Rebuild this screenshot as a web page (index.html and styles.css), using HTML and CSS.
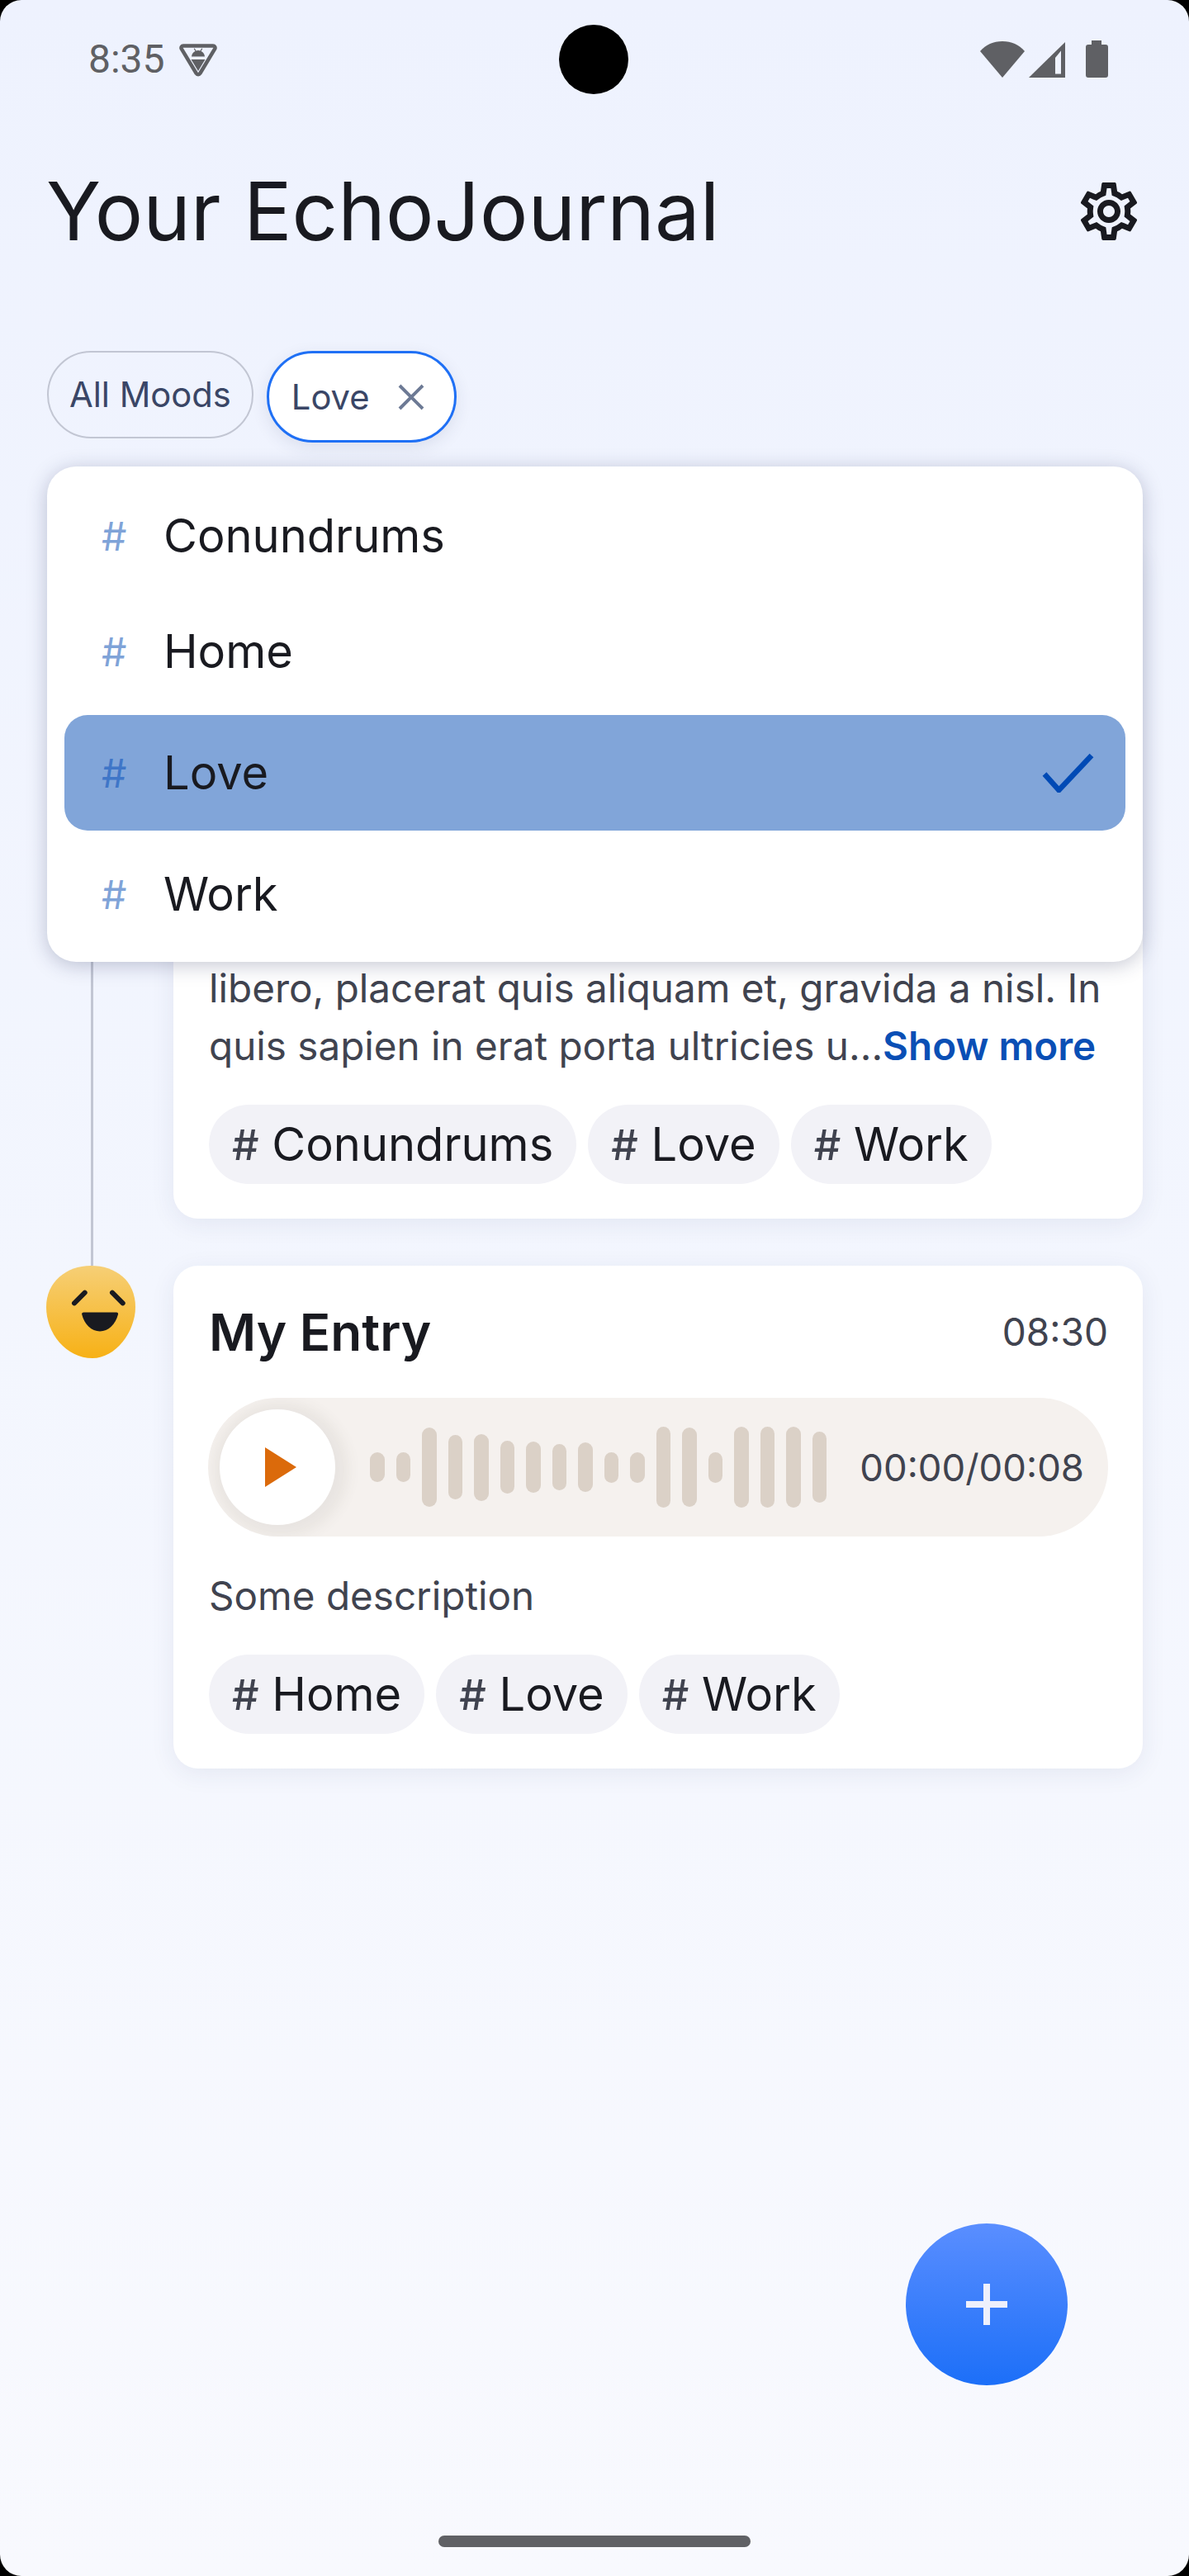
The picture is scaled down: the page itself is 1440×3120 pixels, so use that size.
FILE: index.html
```html
<!DOCTYPE html>
<html lang="en">
<head>
<meta charset="utf-8">
<title>Your EchoJournal</title>
<link rel="stylesheet" href="styles.css">
</head>
<body>
<div class="phone">
  <div class="camera"></div>
  <header class="status">
    <div class="status-left">
      <span class="clock">8:35</span>
      <svg class="debug" viewBox="0 0 46 42"><path d="M5 3.500H41a2.500 2.500 0 0 1 2.200 3.700L25.200 37a2.500 2.500 0 0 1-4.400 0L2.800 7.200A2.500 2.500 0 0 1 5 3.500Z" fill="none" stroke="#5f6064" stroke-width="4.500" stroke-linejoin="round"/><path d="M15 16.500c.3-3.200 2-5.500 4.500-6.600L17.700 7l1-.6 1.900 3a8 8 0 0 1 4.800 0l1.900-3 1 .6-1.800 2.900c2.500 1.100 4.200 3.400 4.500 6.600Z" fill="#5f6064"/><path d="M14.500 20H31.500L23 34Z" fill="#5f6064"/></svg>
    </div>
    <div class="status-right">
      <svg class="wifi" viewBox="0 0 54 44"><path d="M0 12C7 4 16 0 27 0s20 4 27 12L27 44Z" fill="#5f6064"/></svg>
      <svg class="signal" viewBox="0 0 44 43"><path d="M44 0V43H0Z" fill="#5f6064"/><path d="M32 19 39 10.500V38.500H32Z" fill="#eff3fe"/></svg>
      <svg class="battery" viewBox="0 0 27 45"><path d="M7 0H19V5H24a3 3 0 0 1 3 3V42a3 3 0 0 1-3 3H3a3 3 0 0 1-3-3V8a3 3 0 0 1 3-3H7Z" fill="#5f6064"/></svg>
    </div>
  </header>

  <div class="app-bar">
    <h1 class="title">Your EchoJournal</h1>
    <svg class="gear" viewBox="0 0 24 24"><path fill="#191a20" d="M19.430 12.980c.04-.32.07-.64.07-.98 0-.34-.03-.66-.07-.98l2.110-1.650c.19-.15.24-.42.12-.64l-2-3.460c-.09-.16-.26-.25-.44-.25-.06 0-.12.01-.17.03l-2.490 1c-.52-.4-1.080-.73-1.690-.98l-.38-2.650C14.460 2.180 14.250 2 14 2h-4c-.25 0-.46.18-.49.42l-.38 2.650c-.61.25-1.170.59-1.690.98l-2.490-1c-.06-.02-.12-.03-.18-.03-.17 0-.34.09-.43.25l-2 3.460c-.13.22-.07.49.12.64l2.110 1.650c-.04.32-.07.65-.07.98 0 .33.03.66.07.98l-2.110 1.650c-.19.15-.24.42-.12.64l2 3.460c.09.16.26.25.44.25.06 0 .12-.01.17-.03l2.490-1c.52.4 1.080.73 1.690.98l.38 2.650c.03.24.24.42.49.42h4c.25 0 .46-.18.49-.42l.38-2.650c.61-.25 1.170-.59 1.690-.98l2.490 1c.06.02.12.03.18.03.17 0 .34-.09.43-.25l2-3.460c.12-.22.07-.49-.12-.64l-2.110-1.650zm-1.980-1.710c.04.31.05.52.05.73 0 .21-.02.43-.05.73l-.14 1.130.89.7 1.080.84-.7 1.210-1.270-.51-1.040-.42-.9.68c-.43.32-.84.56-1.250.73l-1.060.43-.16 1.130-.2 1.350h-1.400l-.19-1.350-.16-1.130-1.060-.43c-.43-.18-.83-.41-1.230-.71l-.91-.7-1.060.43-1.270.51-.7-1.210 1.080-.84.89-.7-.14-1.130c-.03-.31-.05-.54-.05-.74s.02-.43.05-.73l.14-1.130-.89-.7-1.080-.84.7-1.210 1.270.51 1.040.42.9-.68c.43-.32.84-.56 1.250-.73l1.060-.43.16-1.130.2-1.350h1.390l.19 1.350.16 1.130 1.060.43c.43.18.83.41 1.230.71l.91.7 1.060-.43 1.270-.51.7 1.210-1.070.85-.89.7.14 1.130zM12 8c-2.210 0-4 1.790-4 4s1.790 4 4 4 4-1.790 4-4-1.790-4-4-4zm0 6c-1.100 0-2-.9-2-2s.9-2 2-2 2 .9 2 2-.9 2-2 2z"/></svg>
  </div>

  <div class="filters">
    <div class="filter">All Moods</div>
    <div class="filter filter-active">
      <span>Love</span>
      <svg class="filter-x" viewBox="0 0 32 32"><path d="M2 2 30 30M30 2 2 30" stroke="#6d7a95" stroke-width="4" fill="none"/></svg>
    </div>
    <div class="dropdown">
      <div class="option"><span class="hash">#</span>Conundrums</div>
      <div class="option"><span class="hash">#</span>Home</div>
      <div class="option option-selected"><span class="hash">#</span><span class="option-label">Love</span>
        <svg class="check" viewBox="0 0 64 48"><path d="M3 25.500 20.400 45 60 3" fill="none" stroke="#004ab5" stroke-width="6.500"/></svg>
      </div>
      <div class="option"><span class="hash">#</span>Work</div>
    </div>
  </div>

  <main class="timeline">
    <article class="entry entry-linked">
      <div class="rail">
        <svg class="mood mood-covered" viewBox="0 0 108 112"><defs><linearGradient id="m1" x1="0" y1="0" x2="0" y2="1"><stop offset="0" stop-color="#f6cf76"/><stop offset="1" stop-color="#f7b116"/></linearGradient></defs><path d="M54 0C84 0 108 18 108 50 108 80 84 112 56 112 24 112 0 82 0 50 0 20 24 0 54 0Z" fill="url(#m1)"/><path d="M46.700 32.700 34 45.300M80 32.700 92.700 45.300" stroke="#191a20" stroke-width="6" stroke-linecap="round" fill="none"/><path d="M45.500 56.500H85q2.500 0 2 2.500C84 71 75 79.500 65 79.500 55 79.500 46 71 43.200 59q-.5-2.500 2.300-2.500Z" fill="#191a20"/></svg>
        <div class="rail-line"></div>
      </div>
      <div class="card">
        <div class="card-head"><h2 class="card-title">My Entry</h2><time class="card-time">08:35</time></div>
        <div class="player">
          <div class="play"><svg class="play-icon" viewBox="0 0 38 48"><path d="M0 0 38 24 0 48Z" fill="#db6a0b"/></svg></div>
          <div class="wave">
            <i style="height:36px"></i><i style="height:36px"></i><i style="height:96px"></i><i style="height:78px"></i><i style="height:81px"></i><i style="height:64px"></i><i style="height:62px"></i><i style="height:56px"></i><i style="height:60px"></i><i style="height:37px"></i><i style="height:37px"></i><i style="height:98px"></i><i style="height:96px"></i><i style="height:37px"></i><i style="height:98px"></i><i style="height:98px"></i><i style="height:98px"></i><i style="height:86px"></i>
          </div>
          <span class="player-time">00:00/00:08</span>
        </div>
        <p class="body">Lorem ipsum dolor sit amet, consectetur<br>adipiscing elit. Sed ut ligula vitae nibh<br>libero, placerat quis aliquam et, gravida a nisl. In<br>quis sapien in erat porta ultricies u...<a class="more">Show more</a></p>
        <div class="tags">
          <span class="tag"><b>#</b> Conundrums</span>
          <span class="tag"><b>#</b> Love</span>
          <span class="tag"><b>#</b> Work</span>
        </div>
      </div>
    </article>

    <article class="entry">
      <div class="rail">
        <svg class="mood" viewBox="0 0 108 112"><defs><linearGradient id="m2" x1="0" y1="0" x2="0" y2="1"><stop offset="0" stop-color="#f6cf76"/><stop offset="1" stop-color="#f7b116"/></linearGradient></defs><path d="M54 0C84 0 108 18 108 50 108 80 84 112 56 112 24 112 0 82 0 50 0 20 24 0 54 0Z" fill="url(#m2)"/><path d="M46.700 32.700 34 45.300M80 32.700 92.700 45.300" stroke="#191a20" stroke-width="6" stroke-linecap="round" fill="none"/><path d="M45.500 56.500H85q2.500 0 2 2.500C84 71 75 79.500 65 79.500 55 79.500 46 71 43.200 59q-.5-2.500 2.300-2.500Z" fill="#191a20"/></svg>
      </div>
      <div class="card">
        <div class="card-head"><h2 class="card-title">My Entry</h2><time class="card-time">08:30</time></div>
        <div class="player">
          <div class="play"><svg class="play-icon" viewBox="0 0 38 48"><path d="M0 0 38 24 0 48Z" fill="#db6a0b"/></svg></div>
          <div class="wave">
            <i style="height:36px"></i><i style="height:36px"></i><i style="height:96px"></i><i style="height:78px"></i><i style="height:81px"></i><i style="height:64px"></i><i style="height:62px"></i><i style="height:56px"></i><i style="height:60px"></i><i style="height:37px"></i><i style="height:37px"></i><i style="height:98px"></i><i style="height:96px"></i><i style="height:37px"></i><i style="height:98px"></i><i style="height:98px"></i><i style="height:98px"></i><i style="height:86px"></i>
          </div>
          <span class="player-time">00:00/00:08</span>
        </div>
        <p class="body">Some description</p>
        <div class="tags">
          <span class="tag"><b>#</b> Home</span>
          <span class="tag"><b>#</b> Love</span>
          <span class="tag"><b>#</b> Work</span>
        </div>
      </div>
    </article>
  </main>

  <button class="fab" aria-label="Add"><svg class="fab-plus" viewBox="0 0 50 50"><path d="M25 0V50M0 25H50" stroke="#eef0fc" stroke-width="8" fill="none"/></svg></button>
  <div class="home-bar"></div>
</div>
</body>
</html>
```

FILE: styles.css
```css
* { box-sizing: border-box; }
html, body { margin: 0; padding: 0; background: #000; }
body { font-family: "Inter", "Liberation Sans", sans-serif; color: #191a20; }

.phone {
  position: relative;
  width: 1440px;
  height: 3120px;
  overflow: hidden;
  border-radius: 26px;
  background: linear-gradient(180deg, #eef2fe 0%, #f3f6fe 50%, #f8f9fe 100%);
}
.camera {
  position: absolute;
  left: 677px;
  top: 30px;
  width: 84px;
  height: 84px;
  border-radius: 50%;
  background: #000;
}

.status {
  display: flex;
  justify-content: space-between;
  align-items: center;
  height: 144px;
  padding: 0 98px 0 107px;
}
.status-left { display: flex; align-items: center; gap: 17px; }
.clock { font: 400 48px/1 "Roboto", sans-serif; color: #5f6064; }
.debug { width: 46px; height: 42px; display: block; margin-top: 2px; }
.status-right { display: flex; align-items: flex-end; height: 45px; margin-top: -1px; }
.wifi { width: 54px; height: 44px; display: block; }
.signal { width: 44px; height: 43px; display: block; margin-left: 5px; }
.battery { width: 27px; height: 45px; display: block; margin-left: 25px; }

.app-bar {
  display: flex;
  justify-content: space-between;
  align-items: center;
  height: 112px;
  margin-top: 56px;
  padding: 0 55px 0 56px;
}
.title { margin: 0; font-size: 97.500px; font-weight: 400; line-height: 112px; color: #191a20; }
.gear { width: 84px; height: 84px; display: block; }

.filters {
  position: relative;
  display: flex;
  align-items: flex-start;
  gap: 16px;
  margin-top: 113px;
  padding-left: 57px;
  height: 111px;
}
.filter {
  display: flex;
  align-items: center;
  height: 106px;
  padding: 0 25px;
  border: 2px solid #c2c6d3;
  border-radius: 53px;
  font-size: 41.700px;
  font-weight: 400;
  color: #3a4666;
}
.filter-active {
  height: 111px;
  padding: 0 36px 0 27px;
  gap: 34px;
  border: 3px solid #1f70f5;
  border-radius: 56px;
  background: #fff;
  box-shadow: 0 6px 20px rgba(40, 50, 90, .1);
}
.filter-x { width: 32px; height: 32px; display: block; }

.dropdown {
  position: absolute;
  z-index: 5;
  left: 57px;
  top: 140px;
  width: 1327px;
  padding: 14px 21px 12px;
  border-radius: 35px;
  background: #fff;
  box-shadow: 0 4px 24px rgba(30, 40, 80, .26);
}
.option {
  display: flex;
  align-items: center;
  height: 140px;
  padding: 0 37px 0 45px;
  border-radius: 28px;
  font-size: 56px;
  color: #191a20;
}
.option-selected { margin: 7px 0; background: #81a5d9; }
.option-label { flex: 1; }
.hash { width: 75px; font-size: 48px; color: #7fa3d8; }
.option-selected .hash { color: #3f76c8; }
.check { width: 64px; height: 48px; display: block; }

.timeline { margin-top: 121px; padding: 0 56px; }
.entry { display: flex; gap: 46px; }
.entry-linked { padding-bottom: 57px; }
.rail { display: flex; flex-direction: column; align-items: center; width: 108px; flex: none; }
.mood { width: 108px; height: 112px; display: block; flex: none; }
.mood-covered { width: 100px; height: 104px; margin: 0 0 8px; }
.rail-line { width: 3px; flex: 1; margin: 0 0 -57px 3px; background: #c2c6d3; }
.card {
  width: 1174px;
  padding: 0 42px 42px 43px;
  border-radius: 30px;
  background: #fff;
  box-shadow: 0 6px 30px rgba(40, 50, 100, .08);
}
.card-head { display: flex; justify-content: space-between; align-items: center; height: 160px; }
.card-title { margin: 0; font-size: 62px; font-weight: 600; color: #191a20; }
.card-time { font-size: 46px; color: #40434f; }

.player {
  display: flex;
  align-items: center;
  height: 168px;
  margin-left: -1px;
  padding: 0 29px 0 14px;
  border-radius: 84px;
  background: #f5f1ee;
  overflow: hidden;
}
.play {
  display: flex;
  align-items: center;
  justify-content: center;
  flex: none;
  width: 140px;
  height: 140px;
  border-radius: 50%;
  background: #fff;
  box-shadow: 4px 3px 16px 12px rgba(90, 80, 70, .07);
}
.play-icon { width: 38px; height: 48px; display: block; margin-left: 8px; }
.wave { display: flex; align-items: center; gap: 14px; margin-left: 42px; }
.wave i { display: block; width: 17.500px; border-radius: 9px; background: #dbd1c7; }
.player-time { margin-left: auto; font-size: 45.500px; color: #40434f; }

.body { margin: 37px 0 0; font-size: 47.600px; line-height: 70px; color: #40434f; white-space: nowrap; }
.more { font-weight: 600; color: #0a4fb5; }

.tags { display: flex; gap: 14px; margin-top: 36px; }
.tag {
  display: flex;
  align-items: center;
  height: 96px;
  padding: 0 28px;
  border-radius: 48px;
  background: #f2f2f7;
  font-size: 56px;
  color: #191a20;
  white-space: pre;
}
.tag b { font-size: 51px; font-weight: 500; color: #40434f; }

.fab {
  position: absolute;
  left: 1097px;
  top: 2693px;
  width: 196px;
  height: 196px;
  padding: 0;
  display: flex;
  align-items: center;
  justify-content: center;
  border: 0;
  border-radius: 50%;
  background: linear-gradient(180deg, #5a8eff, #1c6ff8);
}
.fab-plus { width: 50px; height: 50px; display: block; }
.home-bar {
  position: absolute;
  left: 531px;
  top: 3071px;
  width: 378px;
  height: 14px;
  border-radius: 7px;
  background: #606165;
}
```
